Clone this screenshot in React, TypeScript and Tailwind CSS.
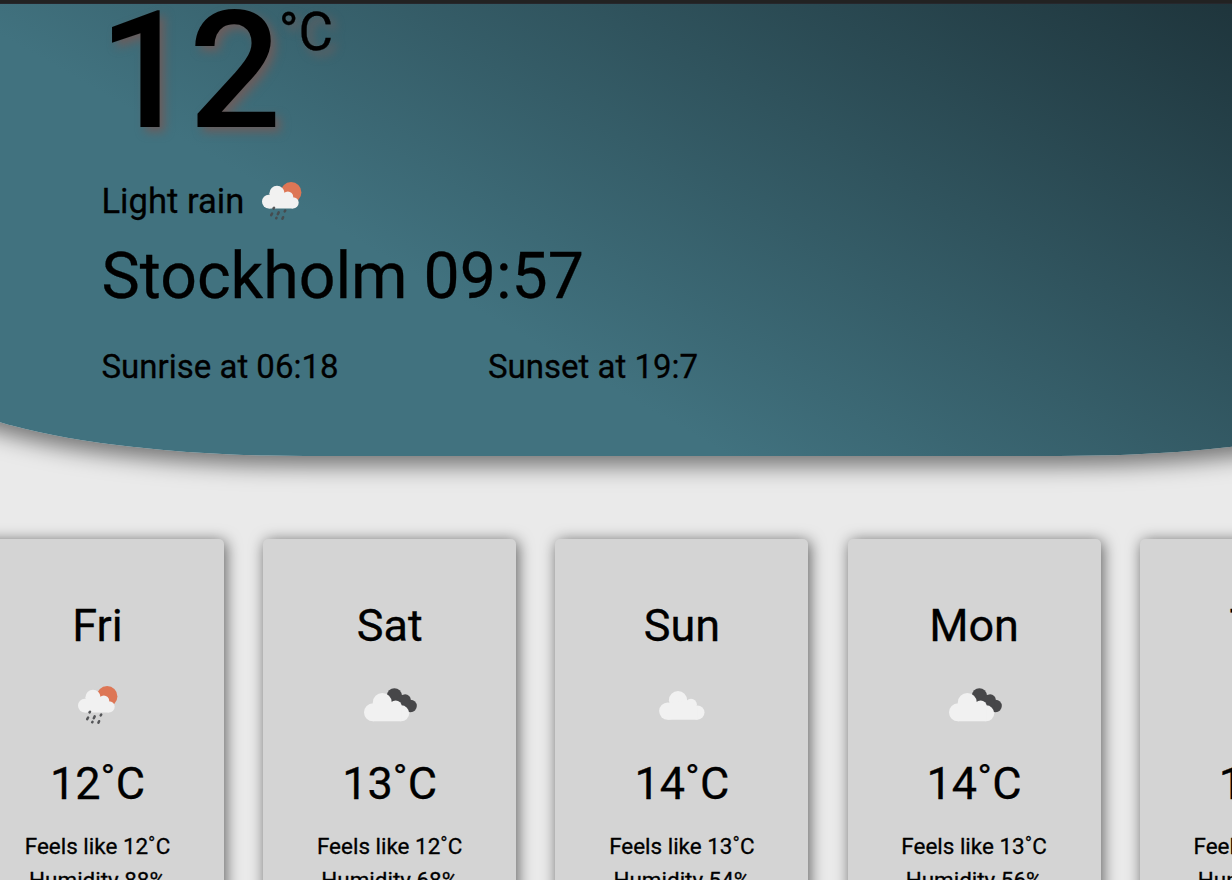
type IconName = "rain" | "broken" | "cloud";

function RainIcon({ className }: { className: string }) {
  return (
    <svg className={className} viewBox="0 0 40 39">
      <circle cx="29.1" cy="10.4" r="10.3" fill="#dd7655" />
      <g fill="#f1f1f1">
        <circle cx="6.8" cy="19.6" r="6.8" />
        <circle cx="15" cy="11.3" r="7.6" />
        <circle cx="25.8" cy="14.8" r="5.4" />
        <circle cx="31.1" cy="20.8" r="5.6" />
        <path d="M6.8 13l3-1h14l7.3 5v9.4H6.8z" />
      </g>
      <g stroke="#47484b" strokeWidth="2.5" strokeLinecap="round" opacity="0.9">
        <path d="M12 25.8l-.5.6M10.1 31.5l-.9 1.6M16.7 30.4l-.9 1.8M23.2 28.6l-.5.8M14.5 35.8l-.3.5M21.1 35.2l-.7 1.5" />
      </g>
    </svg>
  );
}

function ForecastIcon({ name }: { name: IconName }) {
  if (name === "rain") return <RainIcon className="h-[39px] w-10" />;
  if (name === "broken")
    return (
      <svg className="ml-[2px] h-[34px] w-[53px]" viewBox="0 0 53 34">
        <g fill="#474749">
          <circle cx="30.4" cy="7.6" r="7.4" />
          <circle cx="41.2" cy="11.9" r="5.6" />
          <circle cx="46.6" cy="18" r="6.2" />
          <path d="M30 14l6.5-7.5 4.5 1 5 6-1 10-12-6z" />
        </g>
        <g fill="#f1f1f1">
          <circle cx="9" cy="24.3" r="9" />
          <circle cx="18.3" cy="14.4" r="9.5" />
          <circle cx="31.6" cy="18.8" r="6.3" />
          <circle cx="37.2" cy="25.3" r="8" />
          <path d="M9 16l18-1 10.2 6v12.3H9z" />
        </g>
      </svg>
    );
  return (
    <svg className="h-[29px] w-[46px]" viewBox="0 0 46 29">
      <g fill="#f1f1f1">
        <circle cx="8.7" cy="20.1" r="8.6" />
        <circle cx="19" cy="9.2" r="9.1" />
        <circle cx="32" cy="13.6" r="5.9" />
        <circle cx="38.4" cy="21.6" r="7.1" />
        <path d="M8.7 12l18-2 11.7 6v12.7H8.7z" />
      </g>
    </svg>
  );
}

const days: { day: string; icon: IconName; temp: number; feels: number; humidity: number }[] = [
  { day: "Fri", icon: "rain", temp: 12, feels: 12, humidity: 88 },
  { day: "Sat", icon: "broken", temp: 13, feels: 12, humidity: 68 },
  { day: "Sun", icon: "cloud", temp: 14, feels: 13, humidity: 54 },
  { day: "Mon", icon: "broken", temp: 14, feels: 13, humidity: 56 },
  { day: "Tue", icon: "broken", temp: 14, feels: 13, humidity: 58 },
];

export default function App() {
  return (
    <div className="h-[880px] w-full overflow-hidden bg-[#eaeaea] font-['Roboto',sans-serif] text-black [-webkit-text-stroke:0.3px_black]">
      <div className="h-1 border-b border-[#2a2b30] bg-[#252525]" />
      <header className="-ml-[72px] h-[452px] w-[1508px] rounded-b-[377px_82px] bg-[linear-gradient(30deg,#41727f_0%,#41727f_35%,#1e343b_92%)] pl-[173.5px] shadow-[0_10px_22px_rgba(0,0,0,0.5)]">
        <div className="flex h-[170px] items-start [text-shadow:5px_5px_10px_#6a5d5d]">
          <span className="-mt-[28px] -ml-[3px] text-[163px] leading-[191px] font-medium tracking-[-2.5px] [-webkit-text-stroke:0px]">12</span>
          <span className="-mt-[3px] text-[53px] leading-[62px]">°C</span>
        </div>
        <div className="flex h-[54px] items-center">
          <p className="w-[160px] text-[34.6px] leading-[54px]">Light rain</p>
          <RainIcon className="h-[39px] w-10" />
        </div>
        <h1 className="mt-[3px] h-[90px] text-[64.4px] leading-[90px] whitespace-nowrap">Stockholm 09:57</h1>
        <div className="flex pt-[21px] text-[33px] leading-[50px]">
          <p className="w-[386.5px]">Sunrise at 06:18</p>
          <p>Sunset at 19:7</p>
        </div>
      </header>
      <main className="mt-[82.5px] -ml-[29px] flex w-max gap-[39.2px]">
        {days.map((d) => (
          <section
            key={d.day}
            className="flex h-[420px] w-[253px] flex-col items-center rounded-[5px] bg-[#d4d4d4] shadow-[2px_2px_15px_rgba(0,0,0,0.6)]"
          >
            <h2 className="mt-[60px] text-[45px] leading-[54px]">{d.day}</h2>
            <div className="flex h-[105px] items-center justify-center">
              <ForecastIcon name={d.icon} />
            </div>
            <p className="text-[45px] leading-[52px]">{d.temp}˚C</p>
            <div className="mt-[19.5px] text-center text-[22.45px] leading-[34px]">
              <p>Feels like {d.feels}˚C</p>
              <p>Humidity {d.humidity}%</p>
            </div>
          </section>
        ))}
      </main>
    </div>
  );
}
